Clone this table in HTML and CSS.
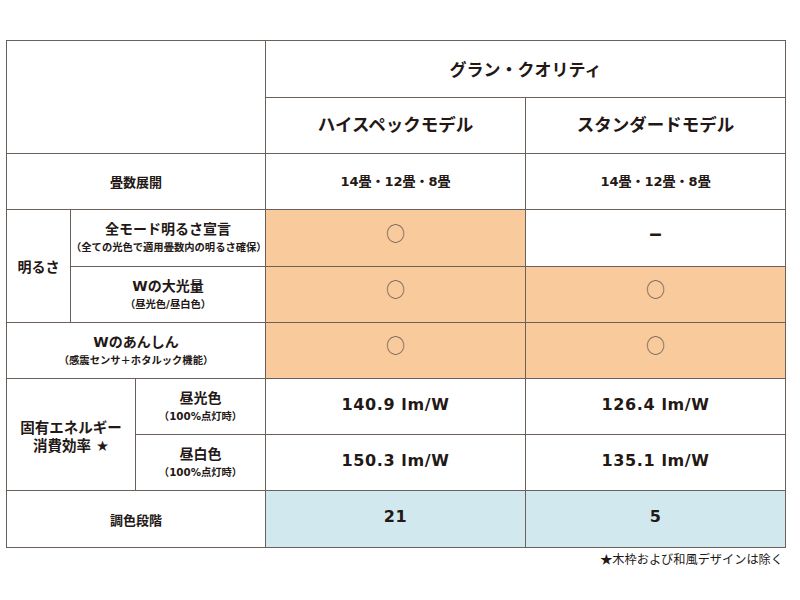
FILE: index.html
```html
<!DOCTYPE html>
<html lang="ja">
<head>
<meta charset="utf-8">
<link rel="stylesheet" href="styles.css">
</head>
<body>
<div class="page">
  <table class="spec">
    <colgroup>
      <col class="c1"><col class="c2"><col class="c3"><col class="c4"><col class="c5">
    </colgroup>
    <tr class="r r57">
      <td colspan="3" rowspan="2"></td>
      <td colspan="2" class="series">グラン・クオリティ</td>
    </tr>
    <tr class="r r56">
      <td class="model">ハイスペックモデル</td>
      <td class="model">スタンダードモデル</td>
    </tr>
    <tr class="r r56">
      <td colspan="3" class="label">畳数展開</td>
      <td class="size">14畳・12畳・8畳</td>
      <td class="size">14畳・12畳・8畳</td>
    </tr>
    <tr class="r r57">
      <td rowspan="2" class="label big">明るさ</td>
      <td colspan="2" class="label"><div class="main">全モード明るさ宣言</div><div class="sub">（全ての光色で適用畳数内の明るさ確保）</div></td>
      <td class="on mk"><span class="mark">○</span></td>
      <td class="mk"><span class="dash">—</span></td>
    </tr>
    <tr class="r r56">
      <td colspan="2" class="label"><div class="main">Wの大光量</div><div class="sub">（昼光色/昼白色）</div></td>
      <td class="on mk"><span class="mark">○</span></td>
      <td class="on mk"><span class="mark">○</span></td>
    </tr>
    <tr class="r r56">
      <td colspan="3" class="label"><div class="main">Wのあんしん</div><div class="sub">（感震センサ＋ホタルック機能）</div></td>
      <td class="on mk"><span class="mark">○</span></td>
      <td class="on mk"><span class="mark">○</span></td>
    </tr>
    <tr class="r r56">
      <td colspan="2" rowspan="2" class="label energy">固有エネルギー<br>消費効率 ★</td>
      <td class="label"><div class="main">昼光色</div><div class="sub">（100%点灯時）</div></td>
      <td class="value">140.9 lm/W</td>
      <td class="value">126.4 lm/W</td>
    </tr>
    <tr class="r r56">
      <td class="label"><div class="main">昼白色</div><div class="sub">（100%点灯時）</div></td>
      <td class="value">150.3 lm/W</td>
      <td class="value">135.1 lm/W</td>
    </tr>
    <tr class="r r57">
      <td colspan="3" class="label">調色段階</td>
      <td class="value blue">21</td>
      <td class="value blue">5</td>
    </tr>
  </table>
  <p class="note">★木枠および和風デザインは除く</p>
</div>
</body>
</html>
```

FILE: styles.css
```css
html, body {
  margin: 0;
  padding: 0;
  background: #ffffff;
}
body {
  font-family: "DejaVu Sans", "Noto Sans CJK JP", sans-serif;
  color: #231815;
}
.page {
  padding: 40px 0 0 6px;
  width: 779px;
}
.spec {
  border-collapse: collapse;
  table-layout: fixed;
  width: 779px;
}
.c1 { width: 64px; }
.c2 { width: 65px; }
.c3 { width: 130px; }
.c4 { width: 260px; }
.c5 { width: 260px; }
.spec td {
  border: 1px solid #6b605a;
  text-align: center;
  vertical-align: middle;
  padding: 0;
  font-weight: bold;
}
.r56 { height: 56px; }
.r57 { height: 57px; }
.series {
  font-family: "Noto Sans CJK JP", sans-serif;
  font-size: 17px;
  padding-bottom: 2px !important;
}
.model {
  font-family: "Noto Sans CJK JP", sans-serif;
  font-size: 17.5px;
  padding-bottom: 4px !important;
}
.label {
  font-size: 13px;
}
.label.big {
  font-size: 14px;
}
.size {
  font-size: 13px;
  padding-bottom: 2px !important;
}
.main {
  font-size: 14px;
  line-height: 19px;
}
.sub {
  font-size: 10.3px;
  line-height: 17px;
}
.energy {
  font-size: 14.5px;
  line-height: 18px;
  padding-top: 4px !important;
}
.on {
  background: #f8ca9c;
}
.blue {
  background: #d1e9ee;
}
.spec td.mk {
  padding-bottom: 12px;
}
.mark {
  font-family: "Noto Sans CJK JP", sans-serif;
  font-weight: normal;
  font-size: 19px;
  color: #6b5a50;
}
.dash {
  font-family: "DejaVu Sans", sans-serif;
  font-weight: bold;
  font-size: 12px;
  text-shadow: 0 1px 0 #231815;
}
.value {
  font-size: 16px;
  letter-spacing: 0.6px;
  padding-bottom: 5px !important;
}
.note {
  margin: 2px 0 0;
  text-align: right;
  font-family: "Noto Sans CJK JP", sans-serif;
  font-size: 12.2px;
  line-height: 18px;
  padding-right: 2px;
}
```
